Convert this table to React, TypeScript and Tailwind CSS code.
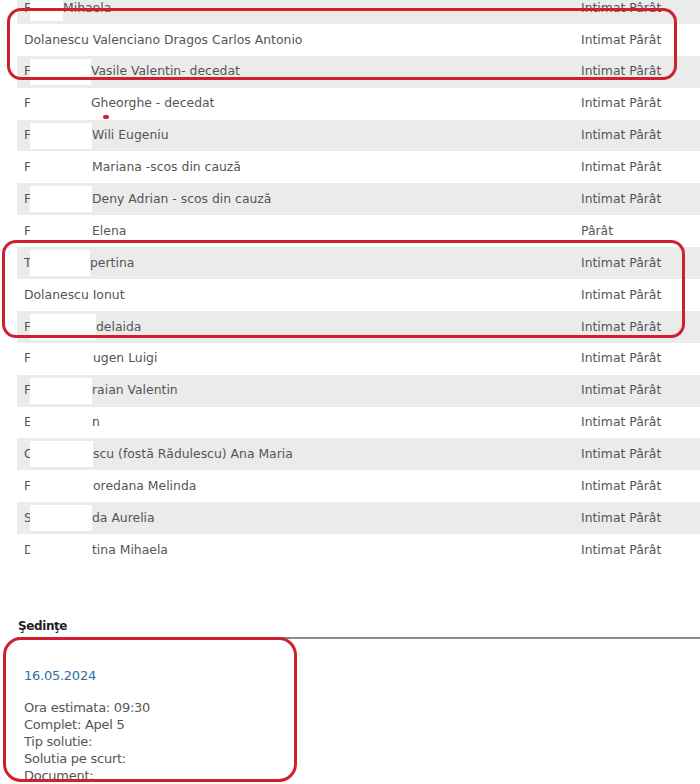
const parties = [
  { prefix: "F", box: 33, rest: "Mihaela", role: "Intimat Pârât" },
  { prefix: "", box: 0, rest: "Dolanescu Valenciano Dragos Carlos Antonio", role: "Intimat Pârât" },
  { prefix: "F", box: 61, rest: "Vasile Valentin- decedat", role: "Intimat Pârât" },
  { prefix: "F", box: 61, rest: "Gheorghe - decedat", role: "Intimat Pârât" },
  { prefix: "F", box: 62, rest: "Wili Eugeniu", role: "Intimat Pârât" },
  { prefix: "F", box: 62, rest: "Mariana -scos din cauză", role: "Intimat Pârât" },
  { prefix: "F", box: 62, rest: "Deny Adrian - scos din cauză", role: "Intimat Pârât" },
  { prefix: "F", box: 62, rest: "Elena", role: "Pârât" },
  { prefix: "T", box: 60, rest: "pertina", role: "Intimat Pârât" },
  { prefix: "", box: 0, rest: "Dolanescu Ionut", role: "Intimat Pârât" },
  { prefix: "F", box: 66, rest: "delaida", role: "Intimat Pârât" },
  { prefix: "F", box: 63, rest: "ugen Luigi", role: "Intimat Pârât" },
  { prefix: "F", box: 62, rest: "raian Valentin", role: "Intimat Pârât" },
  { prefix: "E", box: 62, rest: "n", role: "Intimat Pârât" },
  { prefix: "C", box: 63, rest: "scu (fostă Rădulescu) Ana Maria", role: "Intimat Pârât" },
  { prefix: "F", box: 63, rest: "oredana Melinda", role: "Intimat Pârât" },
  { prefix: "S", box: 62, rest: "da Aurelia", role: "Intimat Pârât" },
  { prefix: "D", box: 62, rest: "tina Mihaela", role: "Intimat Pârât" },
];

const details = [
  "Ora estimata: 09:30",
  "Complet: Apel 5",
  "Tip solutie:",
  "Solutia pe scurt:",
  "Document:",
];

export default function App() {
  return (
    <div className="relative w-[700px] h-[784px] overflow-hidden bg-white font-['DejaVu_Sans',sans-serif] text-[12.4px] text-[#555]">
      {/* parti */}
      <div className="mt-[-8px] ml-[17px]">
        {parties.map((p, i) => (
          <div
            key={i}
            className={`flex items-center h-[31.9px] pl-[7px] ${i % 2 === 0 ? "bg-[#ebebeb]" : "bg-white"}`}
          >
            <div className="flex items-center w-[557px] whitespace-nowrap">
              {p.prefix && (
                <span className="inline-block w-[6px] overflow-hidden">{p.prefix}</span>
              )}
              {p.box > 0 && (
                <span className="inline-block h-[26px] bg-white" style={{ width: p.box }} />
              )}
              <span>{p.rest}</span>
            </div>
            <div className="whitespace-nowrap">{p.role}</div>
          </div>
        ))}
      </div>

      {/* sedinte */}
      <div className="mt-[52px] ml-[17px] border-b-2 border-[#8c8c8c] pb-[3px] pl-[1px]">
        <h3 className="text-[12px] leading-[16px] font-bold text-[#222] tracking-[-0.4px]">Şedinţe</h3>
      </div>
      <div className="ml-[24px] mt-[28px] text-[13px] tracking-[-0.25px]">
        <div className="leading-[17px] text-[#2d6fa5]">16.05.2024</div>
        <div className="mt-[15px] leading-[17px]">
          {details.map((d) => (
            <div key={d}>{d}</div>
          ))}
        </div>
      </div>

      {/* adnotari */}
      <div className="absolute left-[7px] top-[8px] w-[670px] h-[72px] rounded-[14px] border-[3px] border-[#d0202e]" />
      <div className="absolute left-[2px] top-[240px] w-[683px] h-[98px] rounded-[14px] border-[3px] border-[#d0202e]" />
      <div className="absolute left-[3px] top-[637px] w-[294px] h-[145px] rounded-[18px] border-[3px] border-[#d0202e]" />
      <div className="absolute left-[103px] top-[115px] w-[6px] h-[4px] rounded-full bg-[#d0202e]" />
    </div>
  );
}
